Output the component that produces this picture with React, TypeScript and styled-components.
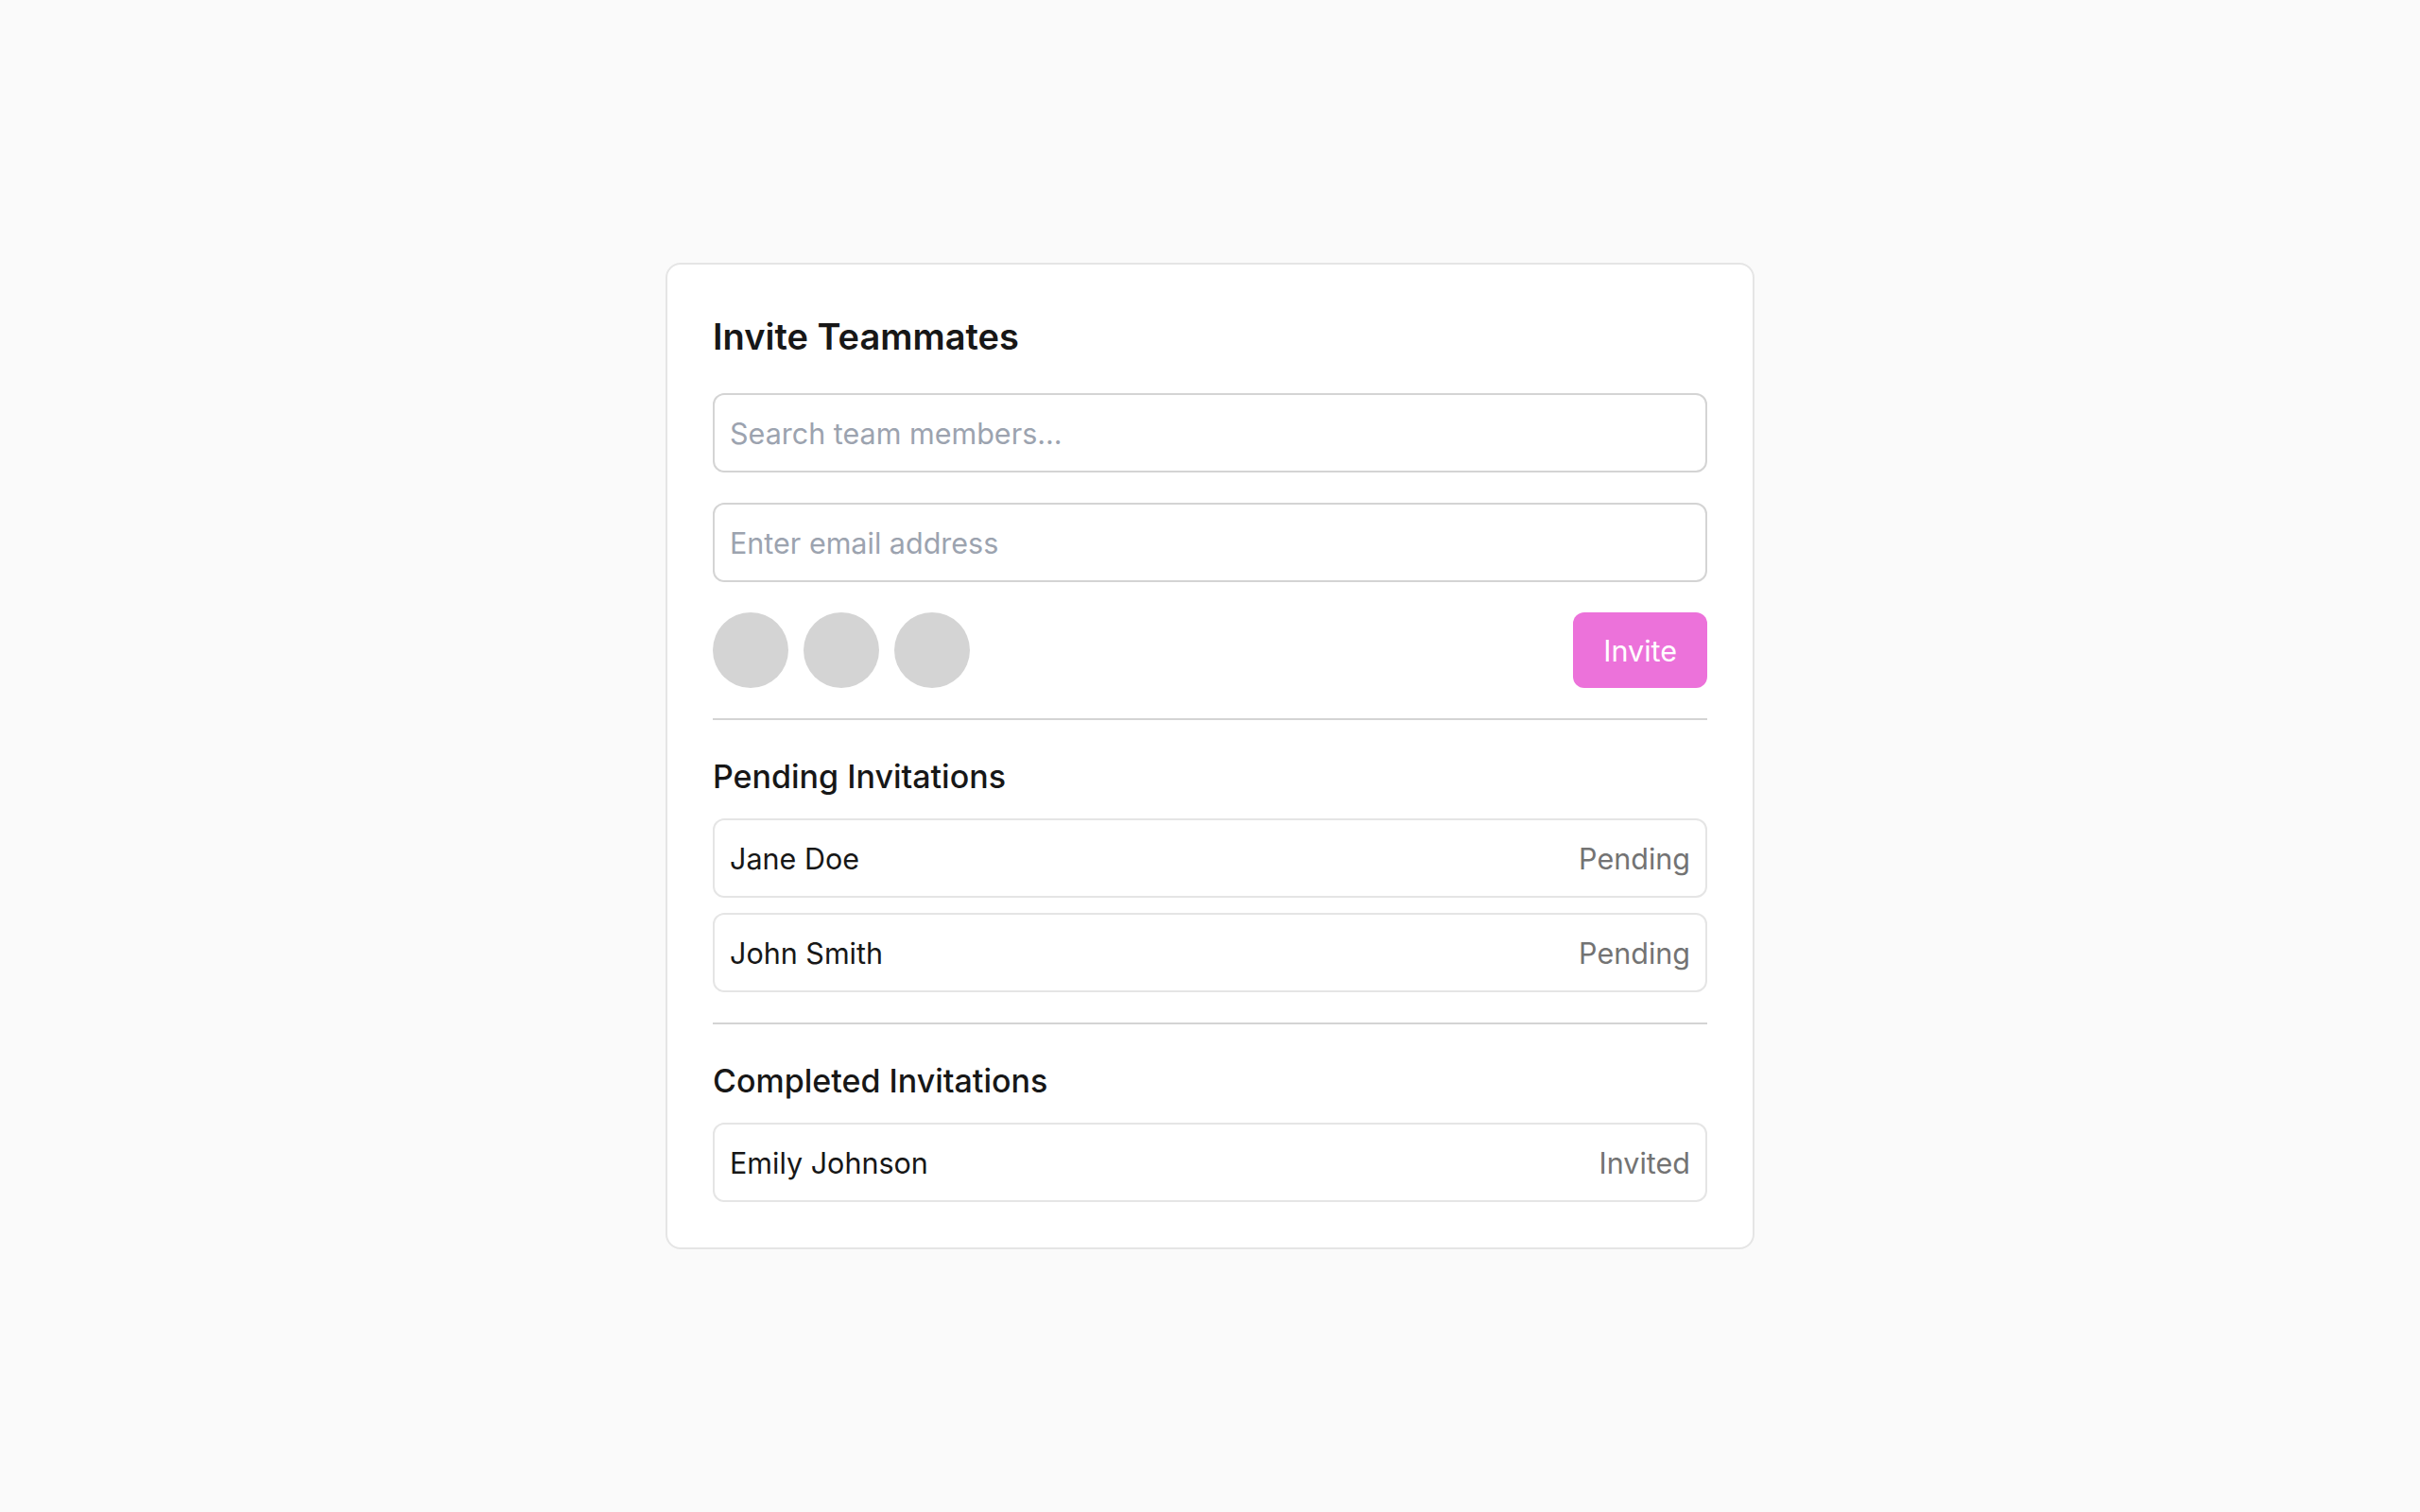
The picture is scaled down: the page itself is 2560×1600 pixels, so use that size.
import React from "react";
import styled, { createGlobalStyle } from "styled-components";

const GlobalStyle = createGlobalStyle`
  html, body {
    margin: 0;
    padding: 0;
    background: #fafafa;
    font-family: Inter, "Noto Sans", "Liberation Sans", sans-serif;
    color: #171717;
  }
  * {
    box-sizing: border-box;
  }
`;

const Page = styled.div`
  min-height: 100vh;
  display: flex;
  align-items: center;
  justify-content: center;
`;

const Card = styled.div`
  width: 1152px;
  background: #ffffff;
  border: 2px solid #e5e5e5;
  border-radius: 16px;
  padding: 48px;
`;

const Title = styled.h2`
  font-size: 38px;
  line-height: 56px;
  font-weight: 600;
  color: #171717;
  margin: 0 0 32px;
`;

const Form = styled.div`
  display: flex;
  flex-direction: column;
  gap: 32px;
`;

const Input = styled.input`
  width: 100%;
  height: 84px;
  padding: 0 16px;
  border: 2px solid #d4d4d4;
  border-radius: 12px;
  font-family: inherit;
  font-size: 30.5px;
  color: #171717;
  background: #ffffff;
  outline: none;

  &::placeholder {
    color: #9ca3af;
  }
`;

const ActionRow = styled.div`
  display: flex;
  align-items: center;
  justify-content: space-between;
`;

const Avatars = styled.div`
  display: flex;
  gap: 16px;
`;

const Avatar = styled.div`
  width: 80px;
  height: 80px;
  border-radius: 50%;
  background: #d4d4d4;
`;

const InviteButton = styled.button`
  height: 80px;
  padding: 0 32px;
  border: none;
  border-radius: 12px;
  background: #ec72da;
  color: #ffffff;
  font-family: inherit;
  font-size: 30.5px;
  cursor: pointer;
`;

const Divider = styled.hr`
  border: none;
  height: 2px;
  background: #d4d4d4;
  margin: 32px 0;
`;

const SectionTitle = styled.h3`
  font-size: 34px;
  line-height: 56px;
  font-weight: 500;
  color: #171717;
  margin: 0 0 16px;
`;

const List = styled.div`
  display: flex;
  flex-direction: column;
  gap: 16px;
`;

const Row = styled.div`
  height: 84px;
  padding: 0 16px;
  border: 2px solid #e5e5e5;
  border-radius: 12px;
  display: flex;
  align-items: center;
  justify-content: space-between;
  font-size: 30.5px;
`;

const Name = styled.span`
  color: #171717;
`;

const Status = styled.span`
  color: #737373;
`;

const pending = [
  { name: "Jane Doe", status: "Pending" },
  { name: "John Smith", status: "Pending" },
];

const completed = [{ name: "Emily Johnson", status: "Invited" }];

export default function App() {
  return (
    <>
      <GlobalStyle />
      <Page>
        <Card>
          <Title>Invite Teammates</Title>
          <Form>
            <Input placeholder="Search team members..." />
            <Input placeholder="Enter email address" />
            <ActionRow>
              <Avatars>
                <Avatar />
                <Avatar />
                <Avatar />
              </Avatars>
              <InviteButton>Invite</InviteButton>
            </ActionRow>
          </Form>

          <Divider />

          <SectionTitle>Pending Invitations</SectionTitle>
          <List>
            {pending.map((p) => (
              <Row key={p.name}>
                <Name>{p.name}</Name>
                <Status>{p.status}</Status>
              </Row>
            ))}
          </List>

          <Divider />

          <SectionTitle>Completed Invitations</SectionTitle>
          <List>
            {completed.map((p) => (
              <Row key={p.name}>
                <Name>{p.name}</Name>
                <Status>{p.status}</Status>
              </Row>
            ))}
          </List>
        </Card>
      </Page>
    </>
  );
}
